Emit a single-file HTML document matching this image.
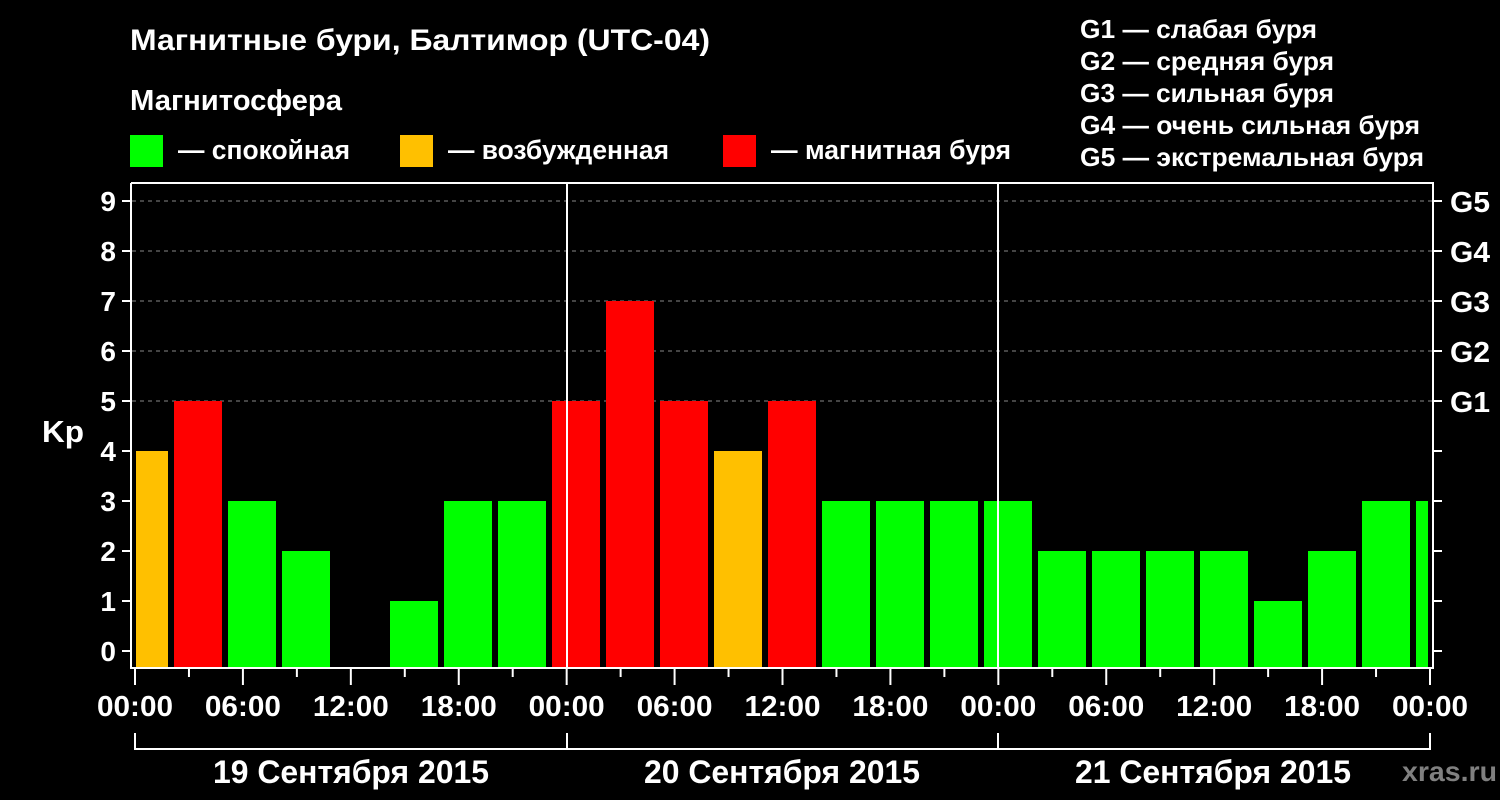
<!DOCTYPE html>
<html><head><meta charset="utf-8"><style>
html,body{margin:0;padding:0;background:#000;}
svg{display:block}
text{font-family:"Liberation Sans",Arial,sans-serif;font-weight:bold;fill:#fff}
</style></head><body>
<svg width="1500" height="800" viewBox="0 0 1500 800" xmlns="http://www.w3.org/2000/svg">
<rect width="1500" height="800" fill="#000"/>
<text x="130" y="50" font-size="30" textLength="580" lengthAdjust="spacingAndGlyphs">Магнитные бури, Балтимор (UTC-04)</text>
<text x="130" y="110" font-size="29" textLength="212" lengthAdjust="spacingAndGlyphs">Магнитосфера</text>
<rect x="130" y="135" width="33" height="32" fill="#00ff00"/>
<text x="178" y="159" font-size="27" textLength="172" lengthAdjust="spacingAndGlyphs">— спокойная</text>
<rect x="400" y="135" width="33" height="32" fill="#ffc000"/>
<text x="448" y="159" font-size="27" textLength="221" lengthAdjust="spacingAndGlyphs">— возбужденная</text>
<rect x="723" y="135" width="33" height="32" fill="#ff0000"/>
<text x="771" y="159" font-size="27" textLength="240" lengthAdjust="spacingAndGlyphs">— магнитная буря</text>
<text x="1080" y="38" font-size="26" textLength="237" lengthAdjust="spacingAndGlyphs">G1 — слабая буря</text>
<text x="1080" y="70" font-size="26" textLength="254" lengthAdjust="spacingAndGlyphs">G2 — средняя буря</text>
<text x="1080" y="102" font-size="26" textLength="254" lengthAdjust="spacingAndGlyphs">G3 — сильная буря</text>
<text x="1080" y="134" font-size="26" textLength="340" lengthAdjust="spacingAndGlyphs">G4 — очень сильная буря</text>
<text x="1080" y="166" font-size="26" textLength="344" lengthAdjust="spacingAndGlyphs">G5 — экстремальная буря</text>
<g stroke="#888" stroke-width="1" stroke-dasharray="4,4">
<line x1="132" y1="201" x2="1432" y2="201"/>
<line x1="132" y1="251" x2="1432" y2="251"/>
<line x1="132" y1="301" x2="1432" y2="301"/>
<line x1="132" y1="351" x2="1432" y2="351"/>
<line x1="132" y1="401" x2="1432" y2="401"/>
</g>
<g id="bars"></g>
<g stroke="#fff" stroke-width="2" fill="none">
<polyline points="131,183 131,668 1433,668 1433,183 131,183"/>
<line x1="567" y1="183" x2="567" y2="668"/>
<line x1="998" y1="183" x2="998" y2="668"/>
<polyline points="135,733 135,749 1430,749 1430,733"/>
<line x1="567" y1="733" x2="567" y2="749"/>
<line x1="998" y1="733" x2="998" y2="749"/>
</g>
<g id="ticks" stroke="#fff" stroke-width="2"></g>
<g id="labels"></g>
<text x="42" y="442" font-size="31" textLength="42" lengthAdjust="spacingAndGlyphs">Kp</text>
<text x="213" y="783" font-size="32" textLength="276" lengthAdjust="spacingAndGlyphs">19 Сентября 2015</text>
<text x="644" y="783" font-size="32" textLength="276" lengthAdjust="spacingAndGlyphs">20 Сентября 2015</text>
<text x="1075" y="783" font-size="32" textLength="276" lengthAdjust="spacingAndGlyphs">21 Сентября 2015</text>
<text x="1402" y="781" font-size="28" textLength="95" lengthAdjust="spacingAndGlyphs" style="fill:#808080">xras.ru</text>
</svg>
<script>
var NS="http://www.w3.org/2000/svg";
function el(p,t,a,txt){var e=document.createElementNS(NS,t);for(var k in a)e.setAttribute(k,a[k]);if(txt!==undefined)e.textContent=txt;document.getElementById(p).appendChild(e);}
var v=[4,5,3,2,0,1,3,3,5,7,5,4,5,3,3,3,3,2,2,2,2,1,2,3,3];
for(var i=0;i<v.length;i++){if(!v[i])continue;var x0=Math.max(120+54*i,136),x1=Math.min(168+54*i,1428);
var c=v[i]>=5?"#ff0000":(v[i]==4?"#ffc000":"#00ff00");var y=651-50*v[i];
el("bars","rect",{x:x0,y:y,width:x1-x0,height:667-y,fill:c});}
for(var k=0;k<=9;k++){var y=651-50*k;el("ticks","line",{x1:122,y1:y,x2:131,y2:y});el("ticks","line",{x1:1433,y1:y,x2:1442,y2:y});
el("labels","text",{x:116,y:y+10,"font-size":28,"text-anchor":"end"},""+k);}
var g=["G1","G2","G3","G4","G5"];for(var k=0;k<5;k++)el("labels","text",{x:1450,y:401-50*k+11,"font-size":29,textLength:40,lengthAdjust:"spacingAndGlyphs"},g[k]);
var hl=["00:00","06:00","12:00","18:00"];
for(var j=0;j<=24;j++){var x=135+j*(1295/24);var maj=j%2==0;el("ticks","line",{x1:x,y1:669,x2:x,y2:maj?685:677});
if(maj){el("labels","text",{x:x-38,y:716,"font-size":29,textLength:76,lengthAdjust:"spacingAndGlyphs"},j==24?"00:00":hl[(j/2)%4]);}}
</script>
</body></html>
